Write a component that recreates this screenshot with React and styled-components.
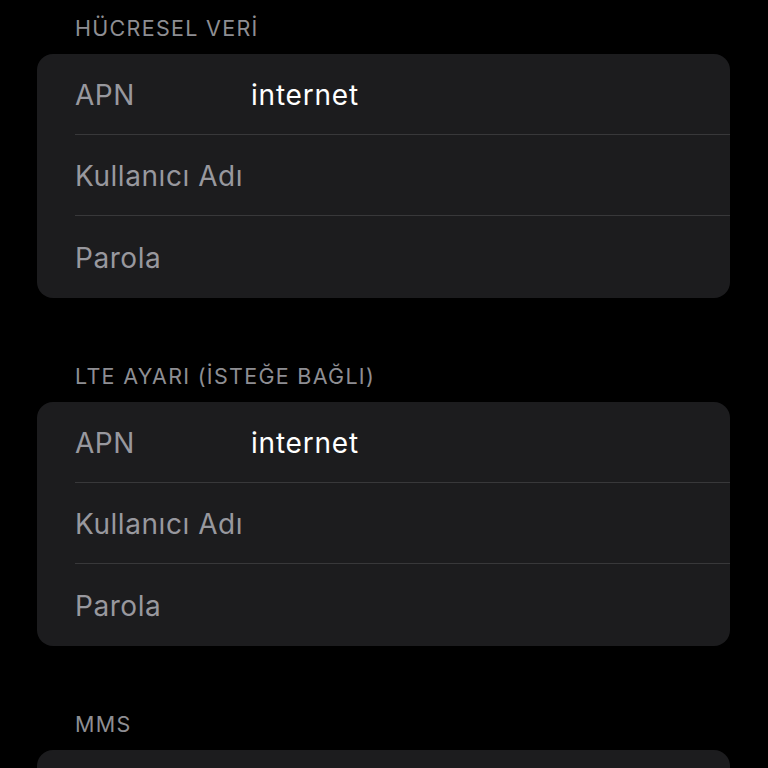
import React from "react";
import styled, { createGlobalStyle } from "styled-components";

const Global = createGlobalStyle`
  html, body { margin: 0; padding: 0; background: #000; }
  body { font-family: Inter, "Noto Sans", "Liberation Sans", sans-serif; -webkit-font-smoothing: antialiased; }
`;

const Page = styled.div`
  display: flex;
  flex-direction: column;
  gap: 50px;
  padding: 0 38px 0 37px;
  height: 768px;
  overflow: hidden;
  box-sizing: border-box;
`;

const Section = styled.section`
  display: flex;
  flex-direction: column;
  flex-shrink: 0;
`;

const Header = styled.div`
  height: 54px;
  display: flex;
  align-items: center;
  padding-left: 38px;
  padding-top: 1px;
  box-sizing: border-box;
  font-size: 21.5px;
  letter-spacing: 1.3px;
  color: #8e8e93;
  text-transform: uppercase;
`;

const Card = styled.div`
  background: #1c1c1e;
  border-radius: 16px;
  overflow: hidden;
  flex-shrink: 0;
  min-height: ${(p) => (p.$empty ? "243px" : "0")};
`;

const Row = styled.div`
  margin-left: 38px;
  padding-top: 2px;
  display: flex;
  align-items: center;
  box-sizing: border-box;
  border-bottom: ${(p) => (p.$last ? "none" : "1px solid #38383a")};
  height: ${(p) => (p.$last ? "82px" : "81px")};
`;

const Label = styled.span`
  width: 176px;
  flex-shrink: 0;
  font-size: 28px;
  letter-spacing: 0.55px;
  color: #98989e;
`;

const Value = styled.span`
  font-size: 28px;
  letter-spacing: 0.8px;
  color: #fff;
`;

const fields = [
  { label: "APN", value: "internet" },
  { label: "Kullanıcı Adı", value: "" },
  { label: "Parola", value: "" },
];

function FieldCard() {
  return (
    <Card>
      {fields.map((f, i) => (
        <Row key={f.label} $last={i === fields.length - 1}>
          <Label>{f.label}</Label>
          {f.value && <Value>{f.value}</Value>}
        </Row>
      ))}
    </Card>
  );
}

export default function App() {
  return (
    <>
      <Global />
      <Page>
        <Section>
          <Header>HÜCRESEL VERİ</Header>
          <FieldCard />
        </Section>
        <Section>
          <Header>LTE AYARI (İSTEĞE BAĞLI)</Header>
          <FieldCard />
        </Section>
        <Section>
          <Header>MMS</Header>
          <Card $empty />
        </Section>
      </Page>
    </>
  );
}
